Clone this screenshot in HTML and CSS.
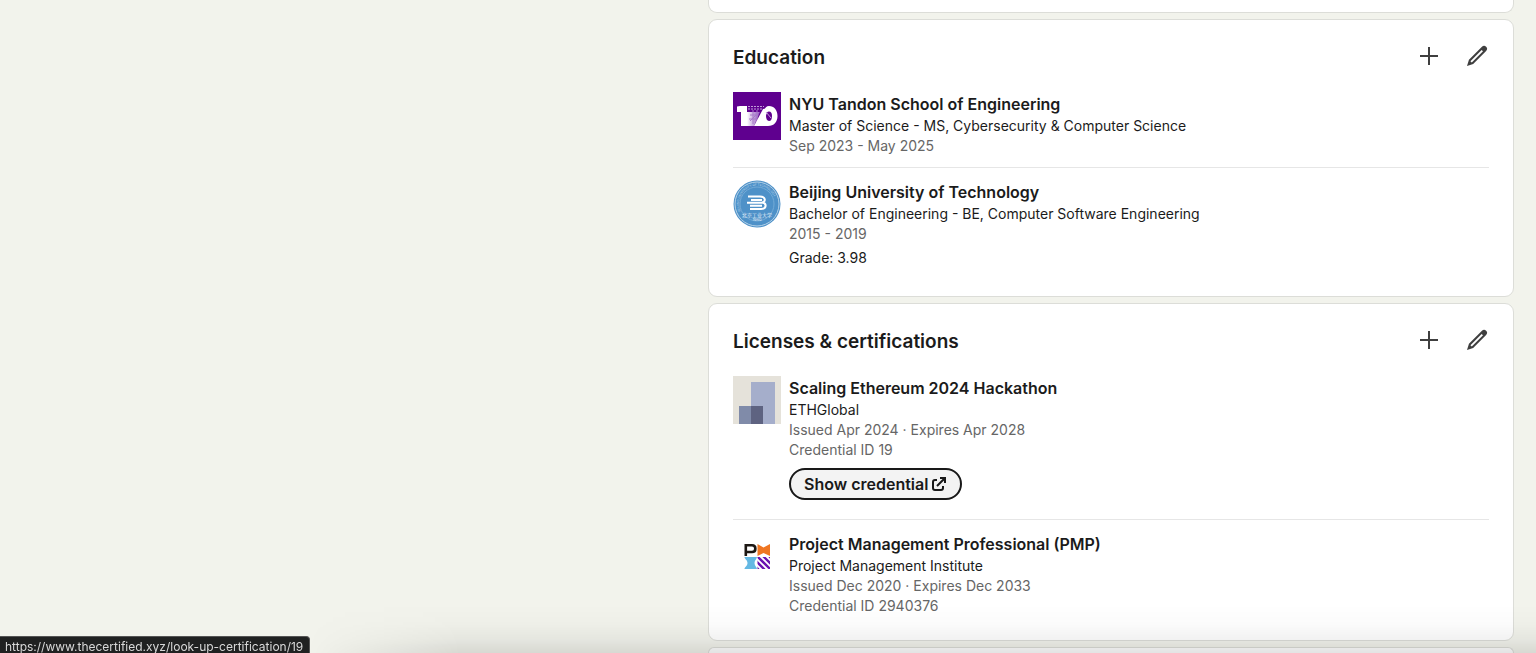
FILE: index.html
```html
<!DOCTYPE html>
<html lang="en">
<head>
<meta charset="utf-8">
<meta name="viewport" content="width=device-width, initial-scale=1">
<title>Profile</title>
<link rel="stylesheet" href="styles.css">
</head>
<body>
<svg class="sprite" aria-hidden="true">
  <symbol id="plus" viewBox="0 0 24 24"><path d="M12 3v18M3 12h18" fill="none" stroke="currentColor" stroke-width="2"/></symbol>
  <symbol id="pencil" viewBox="0 0 24 24"><path fill="currentColor" fill-rule="evenodd" d="M21.13 2.86a3 3 0 0 0-4.17 0l-13 13L2 22l6.19-2L21.13 7a3 3 0 0 0 0-4.16zM6.77 18.57l-1.35-1.34L16.64 6 18 7.35z"/></symbol>
</svg>
<main class="page">
  <div class="feed">
    <section class="card card-previous" aria-label="Experience"></section>

    <section class="card">
      <header class="card-header">
        <h2>Education</h2>
        <button class="icon-button" type="button" aria-label="Add education"><svg class="icon"><use href="#plus"/></svg></button>
        <button class="icon-button" type="button" aria-label="Edit education"><svg class="icon"><use href="#pencil"/></svg></button>
      </header>
      <ul class="entries">
        <li class="entry">
          <svg class="logo" viewBox="0 0 48 48" role="img" aria-label="NYU Tandon">
            <defs><linearGradient id="fade" x1="0" x2="1"><stop offset="0" stop-color="#fff"/><stop offset="1" stop-color="#8b4dbb"/></linearGradient></defs>
            <path fill="#5f008f" d="M0 0h48v48H0z"/>
            <path fill="#fff" d="M4 14.500l3-.5h7v20H8V20H4z"/>
            <path fill="url(#fade)" d="M14 20h13l-6 14h-7z"/>
            <path d="M15 14.500h16M15 17h14" stroke="#c29bd9" stroke-width="1" stroke-dasharray="2 1"/>
            <path d="M17 23h8M16 27h8M20 18v14M24 18v14M26 20l-9 9" stroke="#a77bc8" stroke-width="1" fill="none"/>
            <path fill="#fff" d="M30 17l-9 17h7l8-18z"/>
            <path fill="#fff" fill-rule="evenodd" d="M36 14c5 0 8.500 4 8.500 10S41 34 35 34h-9l3-4c1-9 2-16 7-16zm0 5.500c-2 0-3 2-3 4.500s1 5 3 5 3-2 3-5-1-4.500-3-4.500z"/>
            <path d="M33 20l5 6" stroke="#c29bd9"/>
          </svg>
          <div class="details">
            <h3>NYU Tandon School of Engineering</h3>
            <p>Master of Science - MS, Cybersecurity &amp; Computer Science</p>
            <p class="muted">Sep 2023 - May 2025</p>
          </div>
        </li>
        <li class="entry">
          <svg class="logo" viewBox="0 0 48 48" role="img" aria-label="Beijing University of Technology">
            <defs><path id="seal-arc" d="M8 32a18 18 0 1 1 32 0"/></defs>
            <circle cx="24" cy="24" r="23.500" fill="#4e91c8"/>
            <circle cx="24" cy="24" r="22" fill="none" stroke="#b5d2e8" stroke-width="1"/>
            <circle cx="24" cy="24" r="17" fill="none" stroke="#73abd7" stroke-width="1"/>
            <text class="seal-text"><textPath href="#seal-arc" startOffset="1">BEIJING UNIVERSITY OF TECHNOLOGY</textPath></text>
            <path d="M15 16.500h12c6 0 6 5.500 2 6 5 .5 5 6.500-1 6.500H17M18 20h11M14 22.700h15M17 25.800h12" fill="none" stroke="#fff" stroke-width="2"/>
            <text class="seal-name" x="24" y="36.500">北京工业大学</text>
            <text class="seal-year" x="24" y="41">1960</text>
          </svg>
          <div class="details">
            <h3>Beijing University of Technology</h3>
            <p>Bachelor of Engineering - BE, Computer Software Engineering</p>
            <p class="muted">2015 - 2019</p>
            <p class="note">Grade: 3.98</p>
          </div>
        </li>
      </ul>
    </section>

    <section class="card">
      <header class="card-header">
        <h2>Licenses &amp; certifications</h2>
        <button class="icon-button" type="button" aria-label="Add certification"><svg class="icon"><use href="#plus"/></svg></button>
        <button class="icon-button" type="button" aria-label="Edit certifications"><svg class="icon"><use href="#pencil"/></svg></button>
      </header>
      <ul class="entries">
        <li class="entry entry-action">
          <svg class="logo" viewBox="0 0 48 48" aria-hidden="true">
            <path fill="#e5e2da" d="M0 0h48v48H0z"/><path fill="#a5aecb" d="M18 6h24v42H18z"/>
            <path fill="#808ba9" d="M6 30h12v18H6z"/><path fill="#5e6381" d="M18 30h12v18H18z"/>
          </svg>
          <div class="details">
            <h3>Scaling Ethereum 2024 Hackathon</h3>
            <p>ETHGlobal</p>
            <p class="muted">Issued Apr 2024 · Expires Apr 2028</p>
            <p class="muted">Credential ID 19</p>
            <a class="credential" href="https://www.thecertified.xyz/look-up-certification/19">Show credential
              <svg class="external" viewBox="0 0 16 16" aria-hidden="true"><path fill="none" stroke="currentColor" stroke-width="2" d="M6 4H4a2 2 0 0 0-2 2v6a2 2 0 0 0 2 2h6a2 2 0 0 0 2-2v-2M9 2h5v5M14 2L6 10"/></svg>
            </a>
          </div>
        </li>
        <li class="entry">
          <svg class="logo" viewBox="0 0 48 48" role="img" aria-label="PMI">
            <defs><clipPath id="tile"><path d="M24.500 25H37v12H24.500z"/></clipPath></defs>
            <path fill="none" stroke="#1c1713" stroke-width="2.600" d="M12.800 24V13.300H19c4.500 0 4.500 6.700 0 6.700h-6"/>
            <path fill="#ef7622" d="M24.500 12l6 3.500 6.500-3.500v12l-6.500-3-6 3z"/>
            <path fill="#64b8e3" d="M11.500 25H24c0 2-2.500 3-2.500 6s2.500 4 2.500 6H11.500c0-2 3-3 3-6s-3-4-3-6z"/>
            <path clip-path="url(#tile)" d="M22 22l17 17M28 22l12 12M34 22l6 6M22 28l12 12M22 34l6 6" stroke="#6a12b0" stroke-width="2.300"/>
          </svg>
          <div class="details">
            <h3>Project Management Professional (PMP)</h3>
            <p>Project Management Institute</p>
            <p class="muted">Issued Dec 2020 · Expires Dec 2033</p>
            <p class="muted">Credential ID 2940376</p>
          </div>
        </li>
      </ul>
    </section>

    <section class="card card-next" aria-label="Skills"></section>
  </div>
</main>
<div class="bottom-shade"></div>
<div class="link-status">https://www.thecertified.xyz/look-up-certification/19</div>
</body>
</html>
```
FILE: styles.css
```css
* { box-sizing: border-box; }
html { height: 100%; overflow: hidden; }
body {
  height: 100%;
  margin: 0;
  overflow: hidden;
  background: #f2f3ec;
  color: #1b1b1b;
  font: 14px/20px Inter, Roboto, sans-serif;
}
h2, h3, p, ul { margin: 0; padding: 0; }
ul { list-style: none; }
.sprite { display: none; }
.page {
  display: grid;
  grid-template-columns: 708fr 806fr;
  height: 100%;
  padding-right: 22px;
  overflow: hidden;
}
.feed {
  grid-column: 2;
  display: flex;
  flex-direction: column;
  gap: 6px;
}
.card {
  padding: 20px 24px 24px;
  background: #fff;
  border: 1px solid #dcddd8;
  border-radius: 9px;
}
.card-previous {
  padding: 0 0 12px;
  border-top: 0;
  border-radius: 0 0 9px 9px;
}
.card-next {
  padding: 5px 0 0;
  border-bottom: 0;
  border-radius: 9px 9px 0 0;
}
.card-header {
  display: flex;
  align-items: center;
  gap: 24px;
  height: 32px;
  margin-bottom: 20px;
}
.card-header h2 {
  flex: 1;
  padding-top: 4px;
  font-size: 19px;
  font-weight: 600;
  line-height: 32px;
}
.icon-button {
  width: 24px;
  height: 24px;
  padding: 0;
  border: 0;
  background: none;
  color: #3f3f3f;
  cursor: pointer;
}
.icon { display: block; width: 24px; height: 24px; }
.entry { display: flex; gap: 8px; }
.entry + .entry {
  margin-top: 11px;
  padding-top: 12px;
  border-top: 1px solid #e6e6e6;
}
.entry-action { padding-bottom: 8px; }
.logo { flex: none; width: 48px; height: 48px; }
.details h3 {
  font-size: 16px;
  font-weight: 600;
  line-height: 24px;
}
.muted { color: #666; }
.note { margin: 4px 0; }
.credential {
  display: inline-flex;
  align-items: center;
  gap: 3px;
  height: 32px;
  margin-top: 8px;
  padding: 0 13px;
  border: 2px solid #191919;
  border-radius: 16px;
  background: #f3f3f3;
  color: #191919;
  font-size: 16px;
  font-weight: 600;
  text-decoration: none;
}
.external { width: 16px; height: 16px; }
.seal-text { fill: #b5d2e8; font: 3px Inter, sans-serif; }
.seal-name, .seal-year { fill: #e4f0f8; text-anchor: middle; }
.seal-name { font: 5px "Noto Sans CJK SC", sans-serif; }
.seal-year { font: 4px Inter, sans-serif; }
.bottom-shade {
  position: fixed;
  right: 0;
  bottom: 0;
  left: 0;
  height: 48px;
  background: linear-gradient(rgba(0, 0, 0, 0), rgba(0, 0, 0, .015) 40%, rgba(0, 0, 0, .05) 72%, rgba(0, 0, 0, .11));
  -webkit-mask-image: linear-gradient(90deg, transparent 20%, #000 30%);
  mask-image: linear-gradient(90deg, transparent 20%, #000 30%);
  pointer-events: none;
}
.link-status {
  position: fixed;
  bottom: 0;
  left: 0;
  height: 17px;
  padding: 1px 6px 0 5px;
  border-top: 1px solid #555;
  border-right: 1px solid #555;
  border-radius: 0 4px 0 0;
  background: #202121;
  color: #d8d8d8;
  font-size: 12px;
  line-height: 18px;
}
```
